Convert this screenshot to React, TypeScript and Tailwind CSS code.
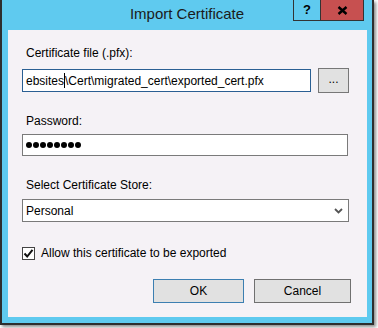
import React from "react";

export default function App() {
  const font = { fontFamily: '"Liberation Sans", Arial, sans-serif' };
  return (
    <div className="w-[378px] h-[328px] bg-white" style={font}>
      <div className="relative w-[374px] h-[325px] bg-[#5fcaef] border-l-2 border-r-2 border-b-2 border-[#2e2e2e] shadow-[2px_2px_3px_rgba(0,0,0,0.45)] flex flex-col">
        {/* title bar */}
        <div className="h-[30px] flex items-center justify-center text-[15px] text-[#1b1b1b] pb-[2px]">
          Import Certificate
        </div>
        <div className="absolute top-0 right-[8px] flex h-[21px] border-l border-r border-b border-[#333]">
          <div className="w-[27px] flex items-center justify-center bg-[#5fcaef] border-r border-[#333] text-[13px] font-bold text-black">
            ?
          </div>
          <div className="w-[42px] flex items-center justify-center bg-[#c75050]">
            <svg width="11" height="9" viewBox="0 0 11 9">
              <path d="M1.5 1 L9.5 8 M9.5 1 L1.5 8" stroke="#000" strokeWidth="2.4" />
            </svg>
          </div>
        </div>

        {/* content */}
        <div className="ml-[6px] mr-[5px] mb-[6px] flex-1 bg-[#f5f2f6] flex flex-col pl-[14px] pt-[15px] text-[12px] text-black">
          <div className="h-[16px] leading-[16px] pl-[4px]">Certificate file (.pfx):</div>
          <div className="mt-[7px] h-[25px] flex items-center gap-[7px]">
            <div className="w-[289px] h-[23px] bg-white border border-[#2a5f93] flex items-center pl-[3px] whitespace-nowrap overflow-hidden">
              <span>ebsites</span>
              <span className="inline-block w-px h-[15px] bg-black" />
              <span>\Cert\migrated_cert\exported_cert.pfx</span>
            </div>
            <div className="w-[31px] h-[25px] bg-[#e1e1e1] border border-[#777] flex items-center justify-center pb-[3px]">
              ...
            </div>
          </div>

          <div className="mt-[20px] h-[16px] leading-[16px] pl-[4px]">Password:</div>
          <div className="mt-[5px] w-[326px] h-[22px] bg-white border border-[#7a7a7a] flex items-center pl-[3px] gap-px">
            {Array.from({ length: 8 }).map((_, i) => (
              <span key={i} className="w-[6px] h-[6px] rounded-full bg-black" />
            ))}
          </div>

          <div className="mt-[21px] h-[16px] leading-[16px] pl-[4px]">Select Certificate Store:</div>
          <div className="mt-[6px] w-[327px] h-[23px] bg-white border border-[#7a7a7a] flex items-center justify-between pl-[3px] pr-[5px]">
            <span>Personal</span>
            <svg width="9" height="6" viewBox="0 0 9 6">
              <path d="M1 1 L4.5 4.5 L8 1" stroke="#555" strokeWidth="1.8" fill="none" />
            </svg>
          </div>

          <div className="mt-[23px] h-[16px] flex items-center gap-[6px]">
            <div className="w-[13px] h-[13px] bg-white border border-[#444] flex items-center justify-center">
              <svg width="11" height="11" viewBox="0 0 11 11">
                <path d="M1.5 5.5 L4.2 8.5 L9.5 1.8" stroke="#111" strokeWidth="2" fill="none" />
              </svg>
            </div>
            <span className="leading-[16px]">Allow this certificate to be exported</span>
          </div>

          <div className="mt-[18px] flex justify-end gap-[10px] pr-[16px]">
            <div className="w-[91px] h-[24px] bg-[#e1e1e1] border border-[#3c7fb1] flex items-center justify-center">
              OK
            </div>
            <div className="w-[97px] h-[24px] bg-[#e1e1e1] border border-[#707070] flex items-center justify-center">
              Cancel
            </div>
          </div>
        </div>
      </div>
    </div>
  );
}
